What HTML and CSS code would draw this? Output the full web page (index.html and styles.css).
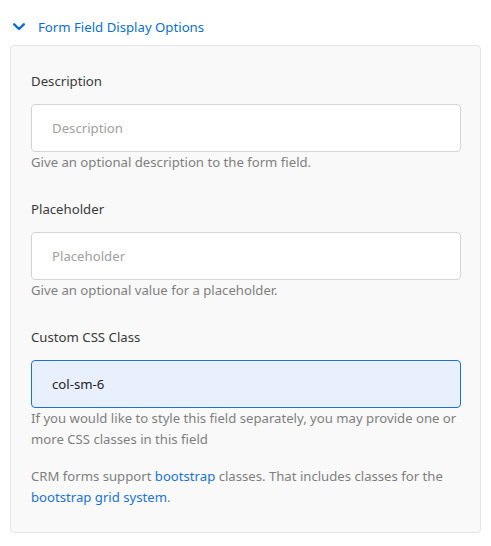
FILE: index.html
```html
<!DOCTYPE html>
<html>
<head>
<meta charset="utf-8">
<link rel="stylesheet" href="styles.css">
</head>
<body>
<div class="wrap">
  <div class="header">
    <svg class="chev" width="12" height="8" viewBox="0 0 12 8"><path d="M1.2 1.3 L6 6 L10.8 1.3" fill="none" stroke="#0a6fd1" stroke-width="2.4" stroke-linecap="round" stroke-linejoin="round"/></svg>
    <span class="title">Form Field Display Options</span>
  </div>
  <div class="panel">
    <div class="group">
      <label class="label">Description</label>
      <div class="input placeholder">Description</div>
      <div class="help">Give an optional description to the form field.</div>
    </div>
    <div class="group">
      <label class="label">Placeholder</label>
      <div class="input placeholder">Placeholder</div>
      <div class="help">Give an optional value for a placeholder.</div>
    </div>
    <div class="group">
      <label class="label">Custom CSS Class</label>
      <div class="input filled">col-sm-6</div>
      <div class="help">If you would like to style this field separately, you may provide one or more CSS classes in this field</div>
    </div>
    <p class="note">CRM forms support <a href="#">bootstrap</a> classes. That includes classes for the <a href="#">bootstrap grid system</a>.</p>
  </div>
</div>
</body>
</html>
```

FILE: styles.css
```css
* { box-sizing: border-box; }
body {
  margin: 0;
  background: #fff;
  font-family: "Noto Sans", "Open Sans", sans-serif;
  color: #333;
}
.wrap {
  padding: 17px 10px 0 10px;
}
.header {
  display: flex;
  align-items: center;
  height: 20px;
  margin-bottom: 8px;
}
.chev {
  margin-left: 3px;
  margin-right: 13px;
}
.title {
  font-size: 13.2px;
  color: #0a6fd1;
  line-height: 20px;
}
.panel {
  width: 471px;
  background: #f9f9f9;
  border: 1px solid #e4e4e4;
  border-radius: 4px;
  padding: 25px 19px 24px 20px;
}
.group {
  margin-bottom: 26px;
}
.group:last-of-type { margin-bottom: 16px; }
.label {
  display: block;
  font-size: 13.2px;
  line-height: 20px;
  color: #3a3a3a;
  margin-bottom: 13px;
}
.input {
  height: 48px;
  border: 1px solid #d4d4d4;
  border-radius: 4px;
  background: #fff;
  padding-left: 20px;
  font-size: 13.2px;
  line-height: 46px;
}
.placeholder { color: #a0a0a0; }
.filled {
  background: #e8f0fe;
  border-color: #1a73d4;
  color: #222;
}
.help, .note {
  font-size: 13.15px;
  line-height: 21px;
  color: #7f7f7f;
}
.note { margin: 0; }
.note a {
  color: #1a73d4;
  text-decoration: none;
}
```
